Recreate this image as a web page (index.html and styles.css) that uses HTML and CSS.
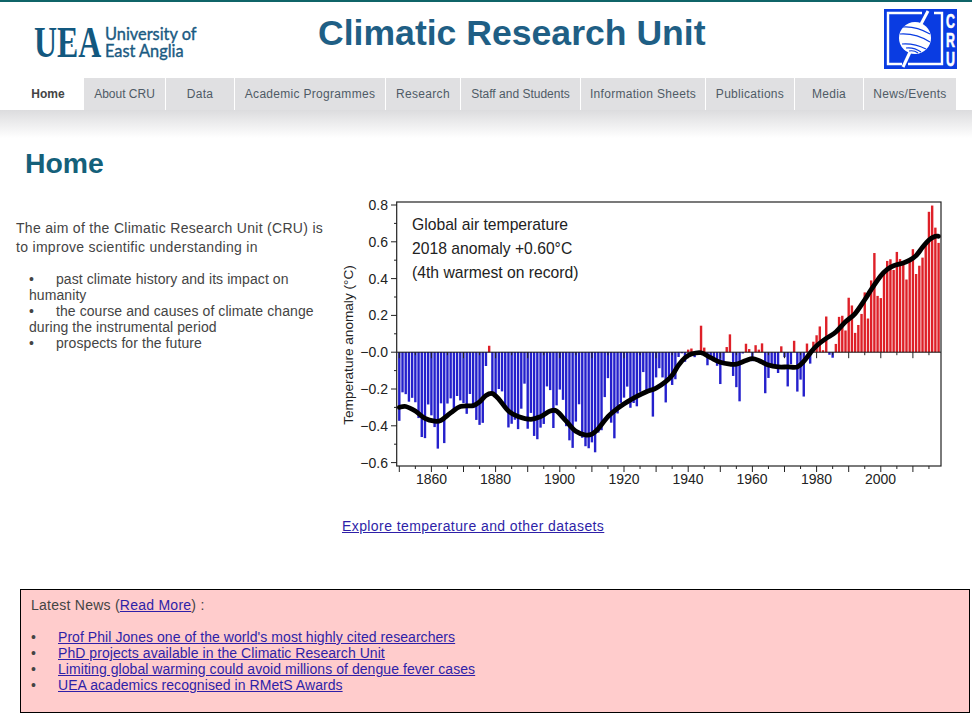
FILE: index.html
```html
<html>
<head>
  <meta charset="UTF-8">
  <title>Climatic Research Unit</title>
  <link rel="stylesheet" href="styles.css">
</head>
<body>
  <div class="header">
    <svg class="uea-logo" width="165" height="36" viewBox="0 0 165 36">
      <text class="uea-mark" transform="translate(0 32) scale(.71 1)">UEA</text>
      <path class="uea-star" d="M42 10 L43.2 17 L49 18.5 L43.2 20 L42 27 L40.8 20 L35 18.5 L40.8 17 Z"/>
      <text class="uea-name" transform="translate(71 15) scale(.91 1)">University of</text>
      <text class="uea-name" transform="translate(71 32) scale(.91 1)">East Anglia</text>
    </svg>
    <div class="site-title">Climatic Research Unit</div>
    <svg class="cru-logo" width="73" height="60" viewBox="0 0 73 60">
      <rect width="73" height="60" fill="#0a3ce2"/>
      <g fill="none" stroke="#fff" stroke-width="2.4">
        <path d="M38 4 H4 V55 H18"/>
        <path d="M50 4 H58 V55 H24"/>
        <path d="M44 2 L36 17" stroke-width="3"/>
        <path d="M27 41 L19 58" stroke-width="3"/>
      </g>
      <circle cx="31" cy="29" r="16" fill="#fff"/>
      <g fill="none" stroke="#0a3ce2" stroke-width="1.1">
        <path d="M19 18 Q32 17 46 25"/>
        <path d="M16 25 Q32 24 46 33"/>
        <path d="M18 35 Q30 34 42 40"/>
        <path d="M22 39 Q30 38 37 43"/>
        <path d="M25 42 Q30 41 34 44"/>
      </g>
      <g class="cru-letters">
        <text transform="translate(62 19) scale(.62 1)">C</text>
        <text transform="translate(62 38) scale(.62 1)">R</text>
        <text transform="translate(62 57) scale(.62 1)">U</text>
      </g>
    </svg>
  </div>

  <div class="nav">
    <a class="tab current" href="#">Home</a>
    <a class="tab tight" href="#">About CRU</a>
    <a class="tab" href="#">Data</a>
    <a class="tab" href="#">Academic Programmes</a>
    <a class="tab" href="#">Research</a>
    <a class="tab tight" href="#">Staff and Students</a>
    <a class="tab" href="#">Information Sheets</a>
    <a class="tab" href="#">Publications</a>
    <a class="tab" href="#">Media</a>
    <a class="tab" href="#">News/Events</a>
  </div>

  <div class="main">
    <h1>Home</h1>
    <div class="content">
      <div class="intro">
        <p>The aim of the Climatic Research Unit (CRU) is to improve scientific understanding in</p>
        <ul>
          <li>past climate history and its impact on humanity</li>
          <li>the course and causes of climate change during the instrumental period</li>
          <li>prospects for the future</li>
        </ul>
      </div>
      <div class="figure">
        <svg id="chart" width="620" height="300" viewBox="340 195 620 300">
          <text class="note" x="412" y="230">Global air temperature</text>
          <text class="note" x="412" y="254">2018 anomaly +0.60°C</text>
          <text class="note" x="412" y="278">(4th warmest on record)</text>
          <text class="axis-title" text-anchor="middle" transform="translate(353 345) rotate(-90)">Temperature anomaly (°C)</text>
          <text class="tick-label" text-anchor="end" x="388" y="210">0.8</text>
          <text class="tick-label" text-anchor="end" x="388" y="247">0.6</text>
          <text class="tick-label" text-anchor="end" x="388" y="284">0.4</text>
          <text class="tick-label" text-anchor="end" x="388" y="320">0.2</text>
          <text class="tick-label" text-anchor="end" x="388" y="357">−0.0</text>
          <text class="tick-label" text-anchor="end" x="388" y="394">−0.2</text>
          <text class="tick-label" text-anchor="end" x="388" y="431">−0.4</text>
          <text class="tick-label" text-anchor="end" x="388" y="468">−0.6</text>
          <text class="tick-label" text-anchor="middle" x="431.5" y="484">1860</text>
          <text class="tick-label" text-anchor="middle" x="495.5" y="484">1880</text>
          <text class="tick-label" text-anchor="middle" x="559.5" y="484">1900</text>
          <text class="tick-label" text-anchor="middle" x="624" y="484">1920</text>
          <text class="tick-label" text-anchor="middle" x="688" y="484">1940</text>
          <text class="tick-label" text-anchor="middle" x="752" y="484">1960</text>
          <text class="tick-label" text-anchor="middle" x="816.5" y="484">1980</text>
          <text class="tick-label" text-anchor="middle" x="880.5" y="484">2000</text>
        </svg>
        <a class="explore" href="#">Explore temperature and other datasets</a>
      </div>
    </div>

    <div class="news">
      Latest News (<a href="#">Read More</a>) :
      <ul>
        <li><a href="#">Prof Phil Jones one of the world's most highly cited researchers</a></li>
        <li><a href="#">PhD projects available in the Climatic Research Unit</a></li>
        <li><a href="#">Limiting global warming could avoid millions of dengue fever cases</a></li>
        <li><a href="#">UEA academics recognised in RMetS Awards</a></li>
      </ul>
    </div>
  </div>
  <script src="chart.js"></script>
</body>
</html>
```

FILE: styles.css
```css
body {
  font-family: "Liberation Sans", Arial, sans-serif;
  font-size: 14px;
  color: #444;
  background: #fff;
  margin: 0;
  border-top: 2px solid #0f6468;
}
a {
  color: #2e1fa8;
}
.header {
  display: flex;
  align-items: flex-start;
  height: 76px;
  padding-left: 34px;
}
.uea-logo {
  margin-top: 23px;
  flex: none;
  overflow: visible;
}
.uea-mark {
  font-family: "Liberation Serif", serif;
  font-size: 45px;
  font-weight: bold;
  fill: #12587f;
}
.uea-star {
  fill: #fff;
}
.uea-name {
  font-family: Lato, sans-serif;
  font-size: 18px;
  fill: #1a5a82;
  stroke: #1a5a82;
  stroke-width: 0.4px;
}
.site-title {
  font-size: 35.6px;
  line-height: 40px;
  font-weight: bold;
  color: #1f5f85;
  margin: 11px 0 0 119px;
}
.cru-logo {
  margin: 7px 15px 0 auto;
  flex: none;
  overflow: visible;
}
.cru-letters {
  font-size: 20px;
  font-weight: bold;
  fill: #fff;
  stroke: #fff;
  stroke-width: 0.6px;
}
.nav {
  display: grid;
  grid-template-columns: 70px 81px 68px 150px 74px 119px 124px 88px 68px 92px;
  gap: 1px;
  height: 30px;
  padding-left: 13px;
  margin-bottom: 2px;
}
.tab {
  line-height: 32px;
  text-align: center;
  font-size: 12px;
  letter-spacing: 0.3px;
  color: #4f5b66;
  background: #e0e0e2;
  text-decoration: none;
}
.tab.tight {
  letter-spacing: 0;
}
.tab.current {
  color: #444;
  font-weight: bold;
  letter-spacing: 0;
  background: #fff;
}
.main {
  background: linear-gradient(#dcdcde, #fff) no-repeat;
  background-size: 100% 28px;
  padding-top: 37px;
}
h1 {
  margin: 0 0 0 25px;
  font-size: 28.4px;
  line-height: 32px;
  color: #14607a;
}
.content {
  display: flex;
  margin-top: 16px;
}
.intro {
  width: 310px;
  margin-left: 16px;
  margin-right: 14px;
  padding-top: 24px;
}
.intro p {
  margin: 0 0 14px;
  line-height: 19px;
  letter-spacing: 0.3px;
}
.intro ul {
  list-style: none;
  margin: 0;
  padding: 0 0 0 13px;
  line-height: 16px;
  letter-spacing: 0.08px;
}
.intro li::before,
.news li::before {
  content: "•";
  display: inline-block;
  width: 27px;
}
.figure {
  width: 620px;
}
#chart {
  display: block;
}
.note {
  font-size: 15.7px;
  fill: #222;
}
.axis-title {
  font-size: 13.6px;
  fill: #222;
}
.tick-label {
  font-size: 14px;
  fill: #222;
}
.explore {
  display: block;
  margin: 23px 0 0 2px;
  line-height: 16px;
  letter-spacing: 0.41px;
}
.news {
  width: 928px;
  margin: 55px 0 0 20px;
  padding: 7px 10px 19px;
  line-height: 16px;
  letter-spacing: 0.25px;
  background: #ffcccc;
  border: 1px solid #000;
}
.news ul {
  list-style: none;
  margin: 16px 0 0;
  padding: 0;
  letter-spacing: 0.06px;
}
```

FILE: chart.js
```js
// annual anomalies 1850-2018
var anomalies = [
  -0.373,-0.218,-0.228,-0.269,-0.248,-0.272,-0.358,-0.461,-0.467,-0.284,
  -0.343,-0.407,-0.524,-0.278,-0.494,-0.279,-0.251,-0.321,-0.238,-0.262,
  -0.276,-0.335,-0.227,-0.304,-0.368,-0.395,-0.384,-0.075,0.035,-0.230,
  -0.227,-0.200,-0.213,-0.296,-0.409,-0.389,-0.367,-0.418,-0.307,-0.171,
  -0.416,-0.330,-0.455,-0.473,-0.410,-0.390,-0.186,-0.206,-0.412,-0.289,
  -0.203,-0.259,-0.402,-0.479,-0.520,-0.377,-0.283,-0.465,-0.511,-0.522,
  -0.490,-0.544,-0.437,-0.424,-0.244,-0.141,-0.383,-0.468,-0.333,-0.275,
  -0.247,-0.187,-0.302,-0.276,-0.294,-0.215,-0.108,-0.210,-0.206,-0.350,
  -0.137,-0.087,-0.137,-0.273,-0.131,-0.178,-0.147,-0.026,-0.006,-0.052,
  0.014,0.020,-0.027,-0.004,0.144,0.025,-0.071,-0.038,-0.039,-0.074,
  -0.173,-0.052,0.028,0.097,-0.129,-0.190,-0.267,-0.007,0.046,0.017,
  -0.049,0.038,0.014,0.048,-0.223,-0.140,-0.068,-0.074,-0.113,0.032,
  -0.027,-0.186,-0.065,0.062,-0.214,-0.149,-0.241,0.047,-0.062,0.057,
  0.092,0.140,0.011,0.194,-0.014,-0.030,0.045,0.192,0.198,0.118,
  0.296,0.254,0.105,0.148,0.208,0.325,0.183,0.390,0.539,0.306,
  0.294,0.441,0.496,0.505,0.447,0.545,0.506,0.491,0.395,0.506,
  0.560,0.425,0.470,0.514,0.579,0.763,0.797,0.677,0.594
];

// smoothed line, [year, value]
var smooth = [
  [1850,-0.30],[1852,-0.295],[1855,-0.32],[1858,-0.36],[1861,-0.375],[1863,-0.37],
  [1866,-0.33],[1869,-0.295],[1873,-0.29],[1875,-0.27],[1877,-0.235],[1879,-0.225],
  [1881,-0.255],[1884,-0.32],[1887,-0.35],[1891,-0.365],[1894,-0.35],[1897,-0.32],
  [1899,-0.32],[1902,-0.375],[1905,-0.43],[1908,-0.45],[1910,-0.445],[1912,-0.415],
  [1915,-0.35],[1918,-0.305],[1921,-0.27],[1924,-0.24],[1927,-0.215],[1930,-0.195],
  [1933,-0.16],[1935,-0.125],[1937,-0.07],[1939,-0.03],[1941,-0.01],[1944,-0.003],
  [1947,-0.03],[1950,-0.055],[1953,-0.065],[1955,-0.065],[1958,-0.045],[1960,-0.035],
  [1962,-0.045],[1965,-0.07],[1968,-0.08],[1971,-0.08],[1974,-0.08],[1976,-0.05],
  [1978,-0.005],[1980,0.035],[1983,0.075],[1986,0.11],[1989,0.165],[1992,0.21],
  [1995,0.285],[1997,0.34],[2000,0.415],[2002,0.45],[2004,0.47],[2007,0.485],
  [2009,0.50],[2011,0.525],[2013,0.57],[2015,0.61],[2017,0.63],[2018,0.63]
];

var chart = document.getElementById("chart");

function xAt(year) { return 399.3 + (year - 1850) * 3.21; }
function yAt(v) { return 352.2 - v * 184; }

function add(tag, attrs) {
  var el = document.createElementNS("http://www.w3.org/2000/svg", tag);
  for (var k in attrs) el.setAttribute(k, attrs[k]);
  chart.appendChild(el);
}

function tick(x1, y1, x2, y2) {
  add("line", {x1: x1, y1: y1, x2: x2, y2: y2, stroke: "#222", "stroke-width": 1});
}

// catmull-rom through the points so the line has no corners
function smoothPath(pts) {
  var d = "M" + pts[0][0] + " " + pts[0][1];
  for (var i = 0; i < pts.length - 1; i++) {
    var p0 = pts[Math.max(i - 1, 0)], p1 = pts[i], p2 = pts[i + 1];
    var p3 = pts[Math.min(i + 2, pts.length - 1)];
    d += " C" + (p1[0] + (p2[0] - p0[0]) / 6) + " " + (p1[1] + (p2[1] - p0[1]) / 6) +
         " " + (p2[0] - (p3[0] - p1[0]) / 6) + " " + (p2[1] - (p3[1] - p1[1]) / 6) +
         " " + p2[0] + " " + p2[1];
  }
  return d;
}

anomalies.forEach(function(v, i) {
  add("rect", {
    x: xAt(1850 + i) - 1.2,
    y: v > 0 ? yAt(v) : yAt(0),
    width: 2.4,
    height: Math.abs(v) * 184,
    fill: v > 0 ? "#de2028" : "#2420cc"
  });
});

add("line", {x1: 397, y1: 352.2, x2: 941, y2: 352.2, stroke: "#111", "stroke-width": 1});

for (var year = 1850; year <= 2015; year += 5) {
  var len = year % 10 == 0 ? 6 : 3;
  tick(xAt(year), 466, xAt(year), 466 + len);
  tick(xAt(year), 352.2, xAt(year), 352.2 + len);
}
for (var n = -6; n <= 8; n++) {
  var y = yAt(n / 10);
  tick(n % 2 == 0 ? 391 : 394, y, 397, y);
}

add("path", {
  d: smoothPath(smooth.map(function(p) { return [xAt(p[0]), yAt(p[1])]; })),
  fill: "none",
  stroke: "#000",
  "stroke-width": 4.8,
  "stroke-linecap": "round"
});

add("rect", {x: 396.7, y: 202, width: 544.3, height: 264, fill: "none", stroke: "#222", "stroke-width": 1.2});
```
